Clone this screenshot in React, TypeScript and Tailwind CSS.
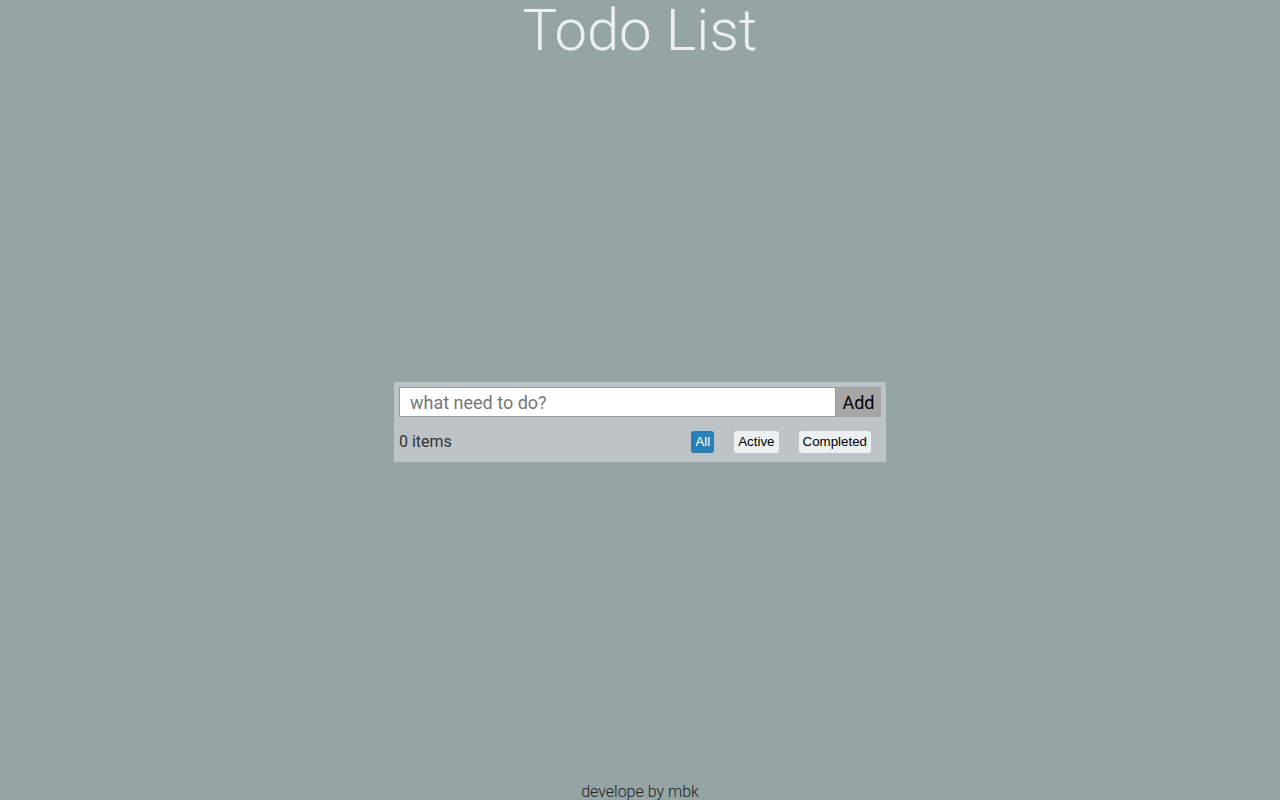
export default function App() {
  return (
    <div className="min-h-screen flex flex-col bg-[#95a5a6] font-['Roboto',sans-serif]">
      <h1 className="text-center text-[58px] leading-[60px] font-light text-[#ecf0f1]">Todo List</h1>
      <main className="flex-1 flex items-center justify-center">
        <div className="w-[492px] bg-[#bdc3c7] p-[5px]">
          <div className="flex h-[30px]">
            <input
              className="flex-1 min-w-0 bg-white border border-[#999] px-[10px] text-[18px] text-[#333] placeholder:text-[#777] outline-none"
              placeholder="what need to do?"
            />
            <button className="w-[45px] bg-[#a6a6a6] text-[18px] text-black">Add</button>
          </div>
          <div className="flex items-center h-[40px] pt-[10px]">
            <span className="text-[16px] leading-[20px] text-[#333]">0 items</span>
            <div className="ml-auto flex font-['Liberation_Sans',sans-serif] text-[13.33px]">
              <button className="mx-[10px] h-[22px] px-[4px] rounded-[3px] bg-[#2980b9] text-white">All</button>
              <button className="mx-[10px] h-[22px] px-[4px] rounded-[3px] bg-[#ecf0f1] text-black">Active</button>
              <button className="mx-[10px] h-[22px] px-[4px] rounded-[3px] bg-[#ecf0f1] text-black">Completed</button>
            </div>
          </div>
        </div>
      </main>
      <footer className="text-center text-[16px] leading-[16px] font-light text-[#222]">develope by mbk</footer>
    </div>
  )
}
